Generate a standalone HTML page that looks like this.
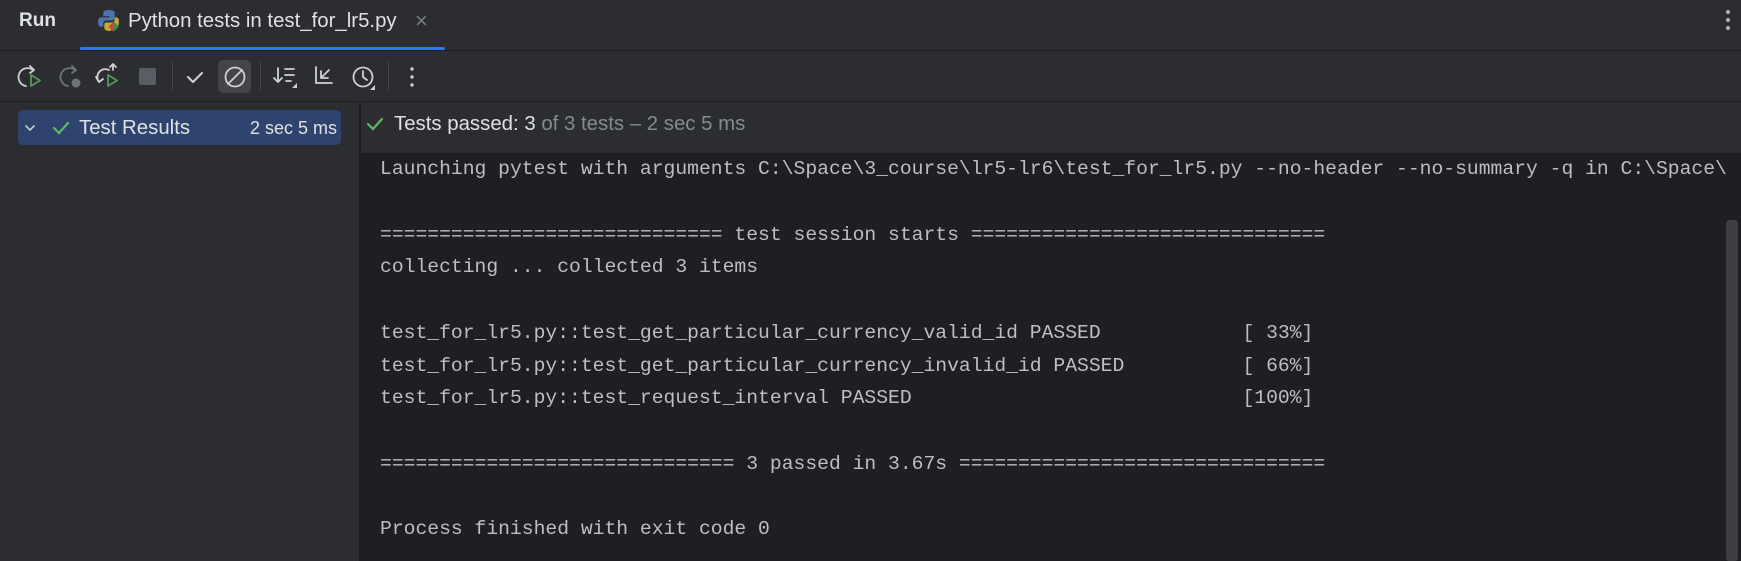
<!DOCTYPE html>
<html><head><meta charset="utf-8"><style>
*{margin:0;padding:0;box-sizing:border-box}
body{width:1741px;height:561px;background:#1e1f22;overflow:hidden;font-family:"Liberation Sans",sans-serif;color:#dfe1e5;position:relative}
.abs{position:absolute;white-space:nowrap}
#top{left:0;top:0;width:1741px;height:51px;background:#2b2d30;border-bottom:1px solid #1e1f22}
#tb{left:0;top:51px;width:1741px;height:51px;background:#2b2d30;border-bottom:1px solid #1e1f22}
#left{left:0;top:102px;width:360px;height:459px;background:#2b2d30;border-right:1px solid #1e1f22}
#hdr{left:361px;top:102px;width:1380px;height:51px;background:#2b2d30}
.sep{position:absolute;top:62px;width:1px;height:29px;background:#43454a}
pre{font-family:"Liberation Mono",monospace;font-size:19.7px;line-height:32.75px;color:#bcbec4;position:absolute;left:380px;top:153px;white-space:pre}
</style></head><body>
<div id="top" class="abs"></div>
<div class="abs" style="left:19px;top:10px;font-size:19px;font-weight:bold;color:#dfe1e5">Run</div>
<svg class="abs" style="left:97px;top:9px" width="25" height="25" viewBox="0 0 24 24">
<path d="M11 1c-4 0-5 1.5-5 3v3h6v1H4c-2 0-3 2-3 4.5S2 17 4 17h2v-3c0-2 1-3 3-3h5c2 0 3-1 3-3V4c0-2-2-3-6-3z" fill="#4a75b0"/>
<path d="M17 8v2c0 2-1 3-3 3H9c-1.5 0-2 1-2 2v3c0 2 2 3 4 3h2l8-6v-4c0-2-1-3-3-3z" fill="#c4a938"/>
<path d="M16 12l-5 5 5 5z" fill="#c9473d"/><path d="M16 12l5 5-5 5z" fill="#3f8a4b"/>
</svg>
<div class="abs" style="left:128px;top:10px;font-size:20.4px;color:#dfe1e5">Python tests in test_for_lr5.py</div>
<div class="abs" style="left:415px;top:8px;font-size:22px;color:#7a7e85">×</div>
<div class="abs" style="left:80px;top:47px;width:365px;height:3px;background:#3574f0;border-radius:2px"></div>
<div class="abs" style="left:1726px;top:10px;width:4px;height:4px;border-radius:2px;background:#b0b3b8;box-shadow:0 8px 0 #b0b3b8,0 16px 0 #b0b3b8"></div>
<div id="tb" class="abs"></div>
<svg class="abs" style="left:0;top:51px" width="440" height="51" viewBox="0 51 440 51" fill="none" stroke-width="1.8" stroke-linecap="round" stroke-linejoin="round">
<rect x="218" y="60" width="33" height="33" rx="5" fill="#43454a" stroke="none"/>
<path d="M33 70a9 9 0 1 0 -7 16" stroke="#ced0d6"/><path d="M30 66l4 4-4 3" stroke="#ced0d6"/><path d="M31 75v11l9-5.5z" stroke="#57965c"/>
<path d="M75 70a9 9 0 1 0 -7 16" stroke="#6f737a"/><path d="M72 66l4 4-4 3" stroke="#6f737a"/><circle cx="76" cy="83" r="4.5" fill="#6f737a" stroke="none"/>
<path d="M109 70a8 8 0 0 0 -10 12" stroke="#ced0d6"/><path d="M96 77l3 5 4-3" stroke="#ced0d6"/><path d="M110 67l3-3 3 3M113 64v6" stroke="#ced0d6"/><path d="M108 75v11l9-5.5z" stroke="#57965c"/>
<rect x="139" y="68" width="17" height="17" rx="2" fill="#5a5d63" stroke="none"/>
<path d="M188 77l5 5 9-9" stroke="#ced0d6" stroke-width="2"/>
<circle cx="235" cy="77" r="9.5" stroke="#ced0d6"/><path d="M228 84l14-14" stroke="#ced0d6"/>
<path d="M278 68v14M274 78l4 4 4-4M285 69h9M285 75h9M286 81h5" stroke="#ced0d6"/><path d="M297 88h-5l5-5z" fill="#ced0d6" stroke="none"/>
<path d="M316 67v16h16M321 78l8-8M321 71v7h7" stroke="#ced0d6"/>
<circle cx="363" cy="77" r="9.5" stroke="#ced0d6"/><path d="M363 71v6l4 3" stroke="#ced0d6"/><path d="M375 90h-5l5-5z" fill="#ced0d6" stroke="none"/>
<circle cx="412" cy="69" r="1.7" fill="#ced0d6" stroke="none"/><circle cx="412" cy="77" r="1.7" fill="#ced0d6" stroke="none"/><circle cx="412" cy="85" r="1.7" fill="#ced0d6" stroke="none"/>
</svg>
<div class="sep" style="left:172px"></div><div class="sep" style="left:260px"></div><div class="sep" style="left:388px"></div>
<div id="left" class="abs"></div>
<div class="abs" style="left:18px;top:110px;width:323px;height:35px;background:#2e436e;border-radius:5px"></div>
<svg class="abs" style="left:18px;top:110px" width="60" height="35" fill="none" stroke-width="2" stroke-linecap="round"><path d="M8 16l4 4 4-4" stroke="#ced0d6" stroke-width="1.6"/><path d="M36 18l5 5 9-10" stroke="#5fb865" stroke-width="2.2"/></svg>
<div class="abs" style="left:79px;top:117px;font-size:20.4px;color:#dfe1e5">Test Results</div>
<div class="abs" style="left:250px;top:118px;font-size:18px;color:#dfe1e5">2 sec 5 ms</div>
<div id="hdr" class="abs"></div>
<svg class="abs" style="left:364px;top:112px" width="26" height="26" fill="none"><path d="M4 12l5 5 9-10" stroke="#5fb865" stroke-width="2.2" stroke-linecap="round"/></svg>
<div class="abs" style="left:394px;top:113px;font-size:20.4px;color:#dfe1e5">Tests passed: 3 <span style="color:#868a91">of 3 tests – 2 sec 5 ms</span></div>
<pre>Launching pytest with arguments C:\Space\3_course\lr5-lr6\test_for_lr5.py --no-header --no-summary -q in C:\Space\

============================= test session starts ==============================
collecting ... collected 3 items

test_for_lr5.py::test_get_particular_currency_valid_id PASSED            [ 33%]
test_for_lr5.py::test_get_particular_currency_invalid_id PASSED          [ 66%]
test_for_lr5.py::test_request_interval PASSED                            [100%]

============================== 3 passed in 3.67s ===============================

Process finished with exit code 0</pre>
<div class="abs" style="left:1726px;top:220px;width:12px;height:341px;background:#3c3e42;border-radius:3px"></div>
</body></html>
